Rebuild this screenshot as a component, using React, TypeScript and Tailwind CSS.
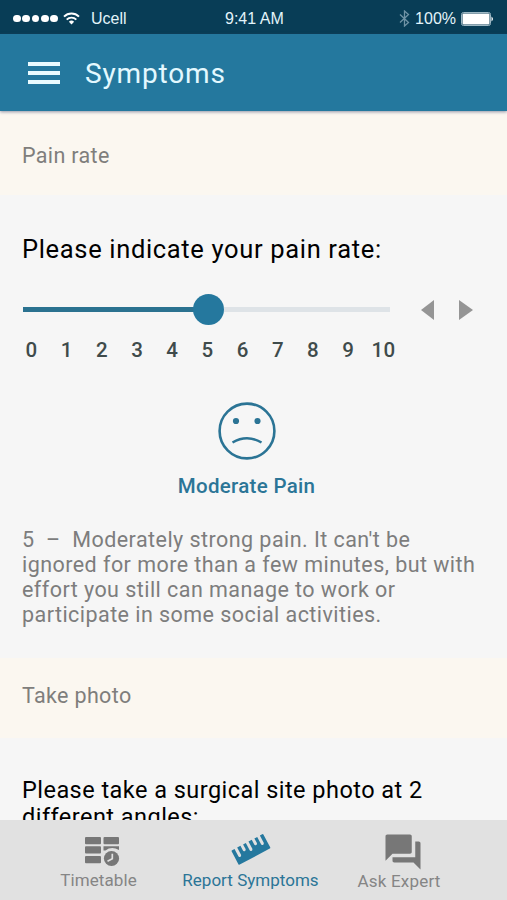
import { ReactNode } from "react";
import { MdForum } from "react-icons/md";

const MAX_RATE = 10;

const StatusBar = () => (
  <div className="flex h-[34px] shrink-0 items-center bg-[#083d56] pt-[3px] pl-[13px] pr-[13px] font-['Liberation_Sans',sans-serif] text-[16px] text-[#e3f4fa]">
    <div className="flex w-[212px] items-center">
      <div className="flex gap-[1.5px]">
        {[0, 1, 2, 3, 4].map((dot) => (
          <span key={dot} className="size-[7.8px] rounded-full bg-white" />
        ))}
      </div>
      <svg className="ml-[5px] h-[13px] w-[17px]" viewBox="0 0 17 13" fill="none" stroke="#fff">
        <path d="M1 4.6a10.6 10.6 0 0 1 15 0" strokeWidth="2" />
        <path d="M3.7 7.6a6.8 6.8 0 0 1 9.6 0" strokeWidth="1.9" />
        <path d="M8.5 12.5l-2.6-2.7a3.8 3.8 0 0 1 5.2 0z" fill="#fff" stroke="none" />
      </svg>
      <span className="ml-[11px]">Ucell</span>
    </div>
    <span className="whitespace-nowrap">9:41 AM</span>
    <div className="ml-auto flex items-center">
      <svg className="mr-[5px] h-[17px] w-[11px]" viewBox="0 0 11 17" fill="none" stroke="#6f93a5" strokeWidth="1.3">
        <path d="M1 4.5l8.5 8-4 3.5V1l4 3.5-8.5 8" />
      </svg>
      <span>100%</span>
      <svg className="ml-[5px] h-[14px] w-[33px]" viewBox="0 0 33 14">
        <rect x="0.5" y="0.5" width="29" height="13" rx="2" fill="none" stroke="#9db8c4" />
        <rect x="1.5" y="1.5" width="27" height="11" rx="1" fill="#fff" />
        <path d="M30.5 4.5q3 2.5 0 5z" fill="#fff" />
      </svg>
    </div>
  </div>
);

const SectionTitle = ({ className, children }: { className: string; children: ReactNode }) => (
  <h2
    className={`flex shrink-0 items-center bg-[#fbf7f0] pl-[22px] text-[21.5px] tracking-[0.35px] text-[#7f7e7c] ${className}`}
  >
    {children}
  </h2>
);

const PainSlider = ({ value }: { value: number }) => (
  <div className="flex h-8 items-center pl-[23px]">
    <div className="flex w-[367px] items-center">
      <div className="h-[5px] bg-[#2b7290]" style={{ width: `${(value / MAX_RATE) * 100 - 3.5}%` }} />
      <div className="-ml-px size-[31px] rounded-full bg-[#25789e]" />
      <div className="h-[5px] grow bg-[#dee3e7]" />
    </div>
    <svg className="mt-[2px] ml-[31px] h-5 w-[13px]" viewBox="0 0 13 20" fill="#959595">
      <path d="M0 10L13 0v20z" />
    </svg>
    <svg className="mt-[2px] ml-[25px] h-5 w-[14px]" viewBox="0 0 14 20" fill="#959595">
      <path d="M14 10L0 0v20z" />
    </svg>
  </div>
);

const RateLabels = () => (
  <div className="ml-[14px] mt-[13px] flex text-[20.5px] leading-6 font-medium text-[#3f4b4b]">
    {Array.from({ length: MAX_RATE + 1 }, (_, rate) => (
      <span key={rate} className="w-[35.2px] text-center tracking-[0.3px]">
        {rate}
      </span>
    ))}
  </div>
);

const SadFace = () => (
  <svg className="h-[58px] w-[58px]" viewBox="0 0 58 58" fill="none" stroke="#2b7495" strokeWidth="2.6">
    <circle cx="29" cy="29" r="27.4" />
    <circle cx="18" cy="19" r="3.1" fill="#2b7495" stroke="none" />
    <circle cx="39.5" cy="19" r="3.1" fill="#2b7495" stroke="none" />
    <path d="M14.5 40.5q14.5-8.5 29 0" />
  </svg>
);

const TimetableIcon = () => (
  <svg className="mt-[2px] ml-[9px] h-[30px] w-[36px]" viewBox="0 0 36 30" fill="#777">
    <rect x="0" y="0" width="16" height="7.3" rx="1" />
    <rect x="18.5" y="0" width="15.5" height="7.3" rx="1" />
    <rect x="0" y="9.3" width="16" height="7.3" rx="1" />
    <path d="M18.5 9.3H34v3.6q-7.5-4-13.5.5h-2z" />
    <rect x="0" y="19" width="16" height="7.3" rx="1" />
    <circle cx="26.5" cy="21.5" r="7.6" />
    <path d="M27.3 16.7v5l-4.8 2.5" fill="none" stroke="#e1e1e1" strokeWidth="1.7" />
  </svg>
);

const RulerIcon = () => (
  <svg className="h-[36px] w-[42px]" viewBox="0 0 42 36" fill="#25789e">
    <path
      transform="translate(21 16.5) rotate(-28)"
      d="M-17-8.2h2.7v8.5q1.5 2.6 3 0v-8.5h3.7v5.6q1.5 2.6 3 0v-5.6h3.1v8.5q1.5 2.6 3 0v-8.5h3.7v5.6q1.5 2.6 3 0v-5.6h3.2v8.5q1.5 2.6 3 0v-8.5h2.6q1 0 1 1v14.2q0 1-1 1h-34q-1 0-1-1v-14.2q0-1 1-1z"
    />
  </svg>
);

const Tab = ({
  label,
  icon,
  className,
}: {
  label: string;
  icon: ReactNode;
  className: string;
}) => (
  <button
    type="button"
    className={`flex flex-col items-center whitespace-nowrap text-[17px] leading-5 ${className}`}
  >
    <span className="flex h-[38px] items-center">{icon}</span>
    {label}
  </button>
);

export default function App() {
  return (
    <div className="flex h-[900px] w-[507px] flex-col overflow-hidden bg-[#f6f6f6] font-[Roboto,sans-serif] text-black">
      <StatusBar />
      <header className="z-10 flex h-[77px] shrink-0 items-center bg-[#24789e] pl-7 shadow-[0_1px_3px_rgba(60,70,110,0.55)]">
        <button type="button" aria-label="Menu" className="flex w-8 flex-col gap-[5px]">
          <span className="h-1 bg-[#e9fbff]" />
          <span className="h-1 bg-[#e9fbff]" />
          <span className="h-1 bg-[#e9fbff]" />
        </button>
        <h1 className="ml-[25px] pt-[2px] text-[28px] leading-8 tracking-[0.85px] text-[#e3f8ff]">
          Symptoms
        </h1>
      </header>

      <main className="flex min-h-0 grow flex-col overflow-hidden">
        <SectionTitle className="h-[84px] pt-[6px]">Pain rate</SectionTitle>
        <section className="h-[463px] shrink-0 pt-[38px]">
          <p className="pl-[22px] text-[25.5px] leading-8 tracking-[0.66px]">
            Please indicate your pain rate:
          </p>
          <div className="mt-[28px]">
            <PainSlider value={5} />
            <RateLabels />
          </div>
          <div className="mt-[40px] flex w-[493px] flex-col items-center">
            <SadFace />
            <p className="mt-[12px] text-[20.5px] leading-7 font-medium tracking-[0.3px] text-[#2b7597]">
              Moderate Pain
            </p>
          </div>
          <p className="mt-[27px] whitespace-pre pl-[22px] text-[21.5px] leading-[25.1px] tracking-[0.45px] text-[#7d7d7d]">
            {"5  –  Moderately strong pain. It can't be\nignored for more than a few minutes, but with\neffort you still can manage to work or\nparticipate in some social activities."}
          </p>
        </section>
        <SectionTitle className="h-[80px] pb-[4px]">Take photo</SectionTitle>
        <p className="mt-[39px] shrink-0 pl-[22px] text-[23.5px] leading-[27px] tracking-[0.46px]">
          Please take a surgical site photo at 2
          <br />
          different angles:
        </p>
      </main>

      <nav className="z-10 flex h-[80px] shrink-0 bg-[#e1e1e1] pt-[12px]">
        <Tab
          label="Timetable"
          icon={<TimetableIcon />}
          className="ml-[60px] w-[77px] tracking-[0.1px] text-[#858585]"
        />
        <Tab
          label="Report Symptoms"
          icon={<RulerIcon />}
          className="ml-[45px] w-[137px] tracking-[0.02px] text-[#2b7597]"
        />
        <Tab
          label="Ask Expert"
          icon={<MdForum className="ml-2 size-[42px] text-[#777]" />}
          className="ml-[39px] w-[82px] pt-px tracking-[0.2px] text-[#858585]"
        />
      </nav>
    </div>
  );
}
